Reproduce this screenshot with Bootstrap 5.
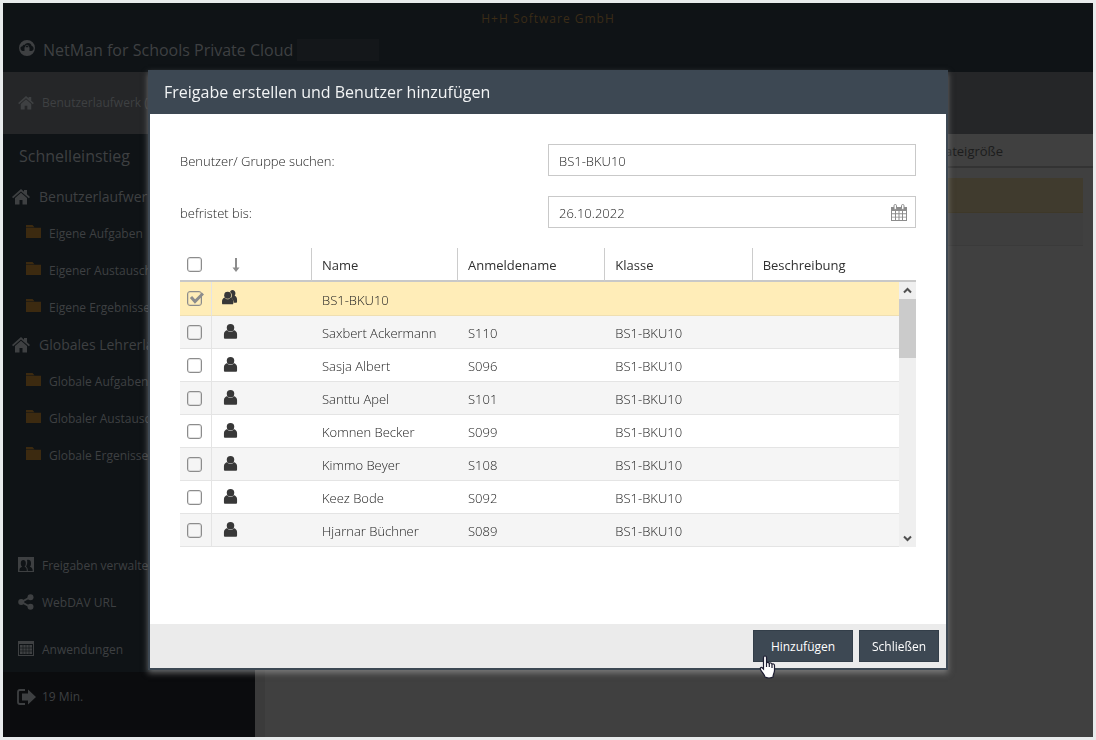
<!DOCTYPE html>
<html lang="de">
<head>
<meta charset="utf-8">
<meta name="viewport" content="width=device-width, initial-scale=1">
<title>NetMan for Schools Private Cloud</title>
<link href="https://cdn.jsdelivr.net/npm/bootstrap@5.3.0/dist/css/bootstrap.min.css" rel="stylesheet">
<style>
  body { font-family: "Open Sans", sans-serif; font-size: 13px; line-height: 20px; background: #e8ebec; color: #404040; }
  a { text-decoration: none; color: inherit; }
  svg { flex: none; fill: currentColor; }
  .shell { min-height: 100vh; padding: 3px; }
  .topbar { background: #0f1316; height: 69px; }
  .company { color: #3b2c16; font-size: 12px; letter-spacing: 1px; padding-top: 6px; }
  .product { font-size: 16px; line-height: 24px; padding: 9px 16px 0; gap: 8px; }
  .product svg { margin-top: -4px; }
  .tenant { width: 82px; height: 22px; background: #14171a; margin-left: -4px; }
  .crumbs { background: #252628; height: 62px; padding: 0 15px; gap: 8px; font-size: 12px; }
  .side { background: #0f1316; width: 252px; flex: none; font-size: 12px; }
  .side-title { font-size: 16px; line-height: 24px; padding: 10px 16px; margin: 0; font-weight: 400; }
  .drive { font-size: 14px; height: 37px; padding-left: 9px; gap: 9px; }
  .entry { height: 37px; padding-left: 23px; gap: 8px; }
  .folder { color: #3c2a10; margin-top: -5px; }
  .tool { height: 37px; padding-left: 15px; gap: 8px; }
  .tool svg { margin-top: -2px; }
  .tool.apps { margin: 10px 0 4px; }
  .session { background: #0b0c0e; height: 65px; padding: 0 14px 16px; gap: 6px; }
  .files { background: #404040; border-left: 10px solid #3b3b3b; }
  .files-head { height: 34px; border-bottom: 2px solid #333; color: #1c1c1c; padding: 2px 90px 0 0; }
  .file-row { height: 33px; margin: 0 10px; background: #3e3e3e; border-bottom: 1px solid #3a3a3a; }
  .file-row.chosen { height: 35px; margin-top: 10px; background: #403b2e; border-color: #3e3828; }
  .share-width { max-width: 800px; margin: 0 auto; }
  .share { border: 2px solid #3d4853; border-top: 0; border-radius: 0; box-shadow: 0 3px 6px rgba(170,170,170,.55); }
  .share-head { background: #3d4853; color: #f2f4f5; height: 44px; padding: 0 14px; border: 0; border-radius: 0; }
  .share-head h1 { font-size: 16px; line-height: 24px; font-weight: 400; margin: 0; }
  .share-body { padding: 30px 30px 77px; font-weight: 300; color: #222; }
  .field { height: 32px; margin-bottom: 20px; }
  .field input { border: 1px solid #c9c9c9; border-radius: 0; height: 32px; font-size: 13px; font-weight: 300; color: #222; padding: 2px 10px 0; }
  .field label { padding-top: 2px; }
  .cal { right: 9px; top: 8px; padding: 0; border: 0; background: none; color: #8c8c8c; line-height: 1; }
  .people { table-layout: fixed; margin: 0; border-collapse: separate; border-spacing: 0; font-weight: 300; }
  .people th { height: 34px; font-weight: 400; color: #303030; padding: 2px 10px 0; border-left: 1px solid #ccc; border-bottom: 2px solid #c8c8c8; vertical-align: middle; }
  .people td { height: 33px; padding: 2px 11px 0; border-bottom: 1px solid #e4e4e4; vertical-align: middle; background: none; box-shadow: none; color: #222; }
  .people th:nth-child(-n+2) { border-left: 0; }
  .people th:first-child, .people td:first-child { padding: 0 7px; }
  .people td:nth-child(2) { border-left: 1px solid #e4e4e4; padding: 0 10px 2px; color: #383838; }
  .people tbody tr:nth-child(even) { background: #f5f5f5; }
  .people tbody tr.chosen { background: #ffedb8; }
  .people tr.chosen td { height: 34px; border-bottom-color: #efdfb2; }
  .people svg { display: block; }
  .people .sort { color: #8c8c8c; margin-left: 11px; }
  .tick { appearance: none; display: block; width: 15px; height: 15px; border: 1px solid #8c8c8c; border-radius: 3px; background: transparent; margin: 0; box-shadow: inset 0 0 0 1px rgba(140,140,140,.25); }
  .tick-mark { left: 2px; top: 0; color: #8c8c8c; pointer-events: none; }
  .scroller { width: 17px; background: #efefef; color: #505050; }
  .scroller-gap { height: 34px; background: #fff; border-bottom: 2px solid #c8c8c8; }
  .scroller-thumb { height: 59px; background: #cbcbcb; }
  .scroller-end { height: 17px; }
  .share-foot { background: #ebebeb; height: 44px; padding: 0 7px; gap: 6px; border: 0; border-radius: 0; }
  .share-foot > * { margin: 0; }
  .act { background: #3d4853; color: #fff; border: 1px solid #333e49; border-radius: 0; width: 80px; height: 32px; font-size: 12px; line-height: 20px; padding: 2px 0 0; display: block; }
  .act:hover { background: #3d4853; color: #fff; }
  .act.wide { width: 100px; }
  .hand { left: 5px; top: 25px; z-index: 2; }
  .dim { color: #3e4042; }
</style>
</head>
<body>
<svg class="d-none" aria-hidden="true">
  <symbol id="house" viewBox="0 0 18 16"><path d="M9 0 0 8l1.200 1.300L9 2.500l7.800 6.800L18 8l-3-2.700V1h-3v1.700z"/><path d="M9 3.800 3 9v6.500h4.500V11h3v4.500H15V9z"/></symbol>
  <symbol id="folder" viewBox="0 0 16 14" preserveAspectRatio="none"><path d="M0 0h7l2 2.300H0zM0 3h16v11H0z"/></symbol>
  <symbol id="person" viewBox="0 0 14 16"><circle cx="7" cy="4" r="4"/><path d="M3.500 6.500C1.200 7.200 0 9 0 11v3.500c0 .8.500 1.300 1.300 1.300h11.400c.8 0 1.300-.5 1.300-1.300V11c0-2-1.200-3.800-3.500-4.500C9.600 8 8.500 8.600 7 8.600S4.400 8 3.500 6.500z"/></symbol>
</svg>
<div class="shell d-flex flex-column">
  <header class="topbar dim">
    <div class="company text-center">H+H Software GmbH</div>
    <div class="product d-flex align-items-center">
      <svg width="16" height="16" viewBox="0 0 16 16"><path fill-rule="evenodd" d="M8 0a8 8 0 1 1 0 16A8 8 0 0 1 8 0zM1.500 8c0 1.700.8 2.900 2.200 2.900h8.600c1.300 0 2.300-1.100 2.300-2.500 0-1.200-.8-2.200-1.900-2.400C12.300 4.300 10.900 3 9 3c-1.500 0-2.600.7-3.200 1.900-1.100-.2-2 .4-2.300 1.400C2.300 6.400 1.500 7.100 1.500 8z"/><path fill-rule="evenodd" d="M5.500 7.300h.8V6.500a1.700 1.700 0 0 1 3.400 0v.8h.8v4.200h-5zM7 7.300h2V6.500a1 1 0 0 0-2 0z"/></svg>
      <span>NetMan for Schools Private Cloud</span><span class="tenant"></span>
    </div>
  </header>
  <nav class="crumbs dim d-flex align-items-center" aria-label="Pfad">
    <svg width="16" height="14"><use href="#house"/></svg><a href="#">Benutzerlaufwerk (</a>
  </nav>
  <div class="d-flex flex-grow-1">
    <aside class="side dim d-flex flex-column">
      <h2 class="side-title">Schnelleinstieg</h2>
      <a href="#" class="drive d-flex align-items-center"><svg width="18" height="16"><use href="#house"/></svg>Benutzerlaufwerk</a>
      <a href="#" class="entry d-flex align-items-center"><svg class="folder" width="15" height="13"><use href="#folder"/></svg>Eigene Aufgaben</a>
      <a href="#" class="entry d-flex align-items-center"><svg class="folder" width="15" height="13"><use href="#folder"/></svg>Eigener Austausch</a>
      <a href="#" class="entry d-flex align-items-center"><svg class="folder" width="15" height="13"><use href="#folder"/></svg>Eigene Ergebnisse</a>
      <a href="#" class="drive d-flex align-items-center"><svg width="18" height="16"><use href="#house"/></svg>Globales Lehrerlaufwerk</a>
      <a href="#" class="entry d-flex align-items-center"><svg class="folder" width="15" height="13"><use href="#folder"/></svg>Globale Aufgaben</a>
      <a href="#" class="entry d-flex align-items-center"><svg class="folder" width="15" height="13"><use href="#folder"/></svg>Globaler Austausch</a>
      <a href="#" class="entry d-flex align-items-center"><svg class="folder" width="15" height="13"><use href="#folder"/></svg>Globale Ergenisse</a>
      <div class="mt-auto">
        <a href="#" class="tool d-flex align-items-center"><svg width="16" height="15" viewBox="0 0 16 15"><path d="M0 0h16v15H0z"/><path d="M1.500 14c0-2.500.3-3.300 2.600-4.200C3 8.800 2.800 7.800 2.800 6c0-2 1-3 2.500-3s2.500 1 2.500 3c0 1.800-.2 2.800-1.300 3.800C8.200 10.400 8.800 11 8.800 14z" fill="#0f1316"/><path d="M9 3c1.700-.8 4 0 4 3 0 1.800-.2 2.800-1.200 3.800 2 .7 2.900 1.700 2.900 4.200h-4.900c0-2.300-.4-3.500-1.800-4.400C9.300 7.500 9.500 5 9 3z" fill="#0f1316"/></svg>Freigaben verwalten</a>
        <a href="#" class="tool d-flex align-items-center"><svg width="16" height="16" viewBox="0 0 16 16"><path d="M12.500 3 3.500 8l9 5" fill="none" stroke="currentColor" stroke-width="2"/><circle cx="12.500" cy="3.300" r="3"/><circle cx="3.200" cy="8" r="3"/><circle cx="12.500" cy="12.700" r="3"/></svg>WebDAV URL</a>
        <a href="#" class="tool apps d-flex align-items-center"><svg width="16" height="15" viewBox="0 0 16 15"><path fill-rule="evenodd" d="M0 0h16v15H0zM1 3v11h14V3z"/><path d="M2 4h12v9H2z"/><path d="M5 4v9M8 4v9M11 4v9M2 7h12M2 10h12" stroke="#0f1316" stroke-width=".6"/></svg>Anwendungen</a>
      </div>
      <div class="session d-flex align-items-center">
        <svg width="19" height="16" viewBox="0 0 19 16"><path d="M8 1H3Q1 1 1 3v10q0 2 2 2h5" fill="none" stroke="currentColor" stroke-width="1.800"/><path d="M5 4.500h6V.5L19 8l-8 7.500v-4H5z"/></svg>19 Min.
      </div>
    </aside>
    <main class="files flex-grow-1">
      <div class="files-head d-flex align-items-center justify-content-end">Dateigröße</div>
      <div class="file-row chosen"></div>
      <div class="file-row"></div>
    </main>
  </div>
</div>

<div class="modal d-block" tabindex="-1" role="dialog" aria-modal="true" aria-labelledby="shareTitle">
  <div class="share-width d-flex align-items-center min-vh-100">
    <form class="share modal-content" onsubmit="return false">
      <div class="share-head modal-header"><h1 id="shareTitle">Freigabe erstellen und Benutzer hinzufügen</h1></div>
      <div class="share-body modal-body">
        <div class="field row g-0 align-items-center">
          <label class="col-6" for="who">Benutzer/ Gruppe suchen:</label>
          <div class="col-6"><input id="who" class="form-control" type="text" value="BS1-BKU10"></div>
        </div>
        <div class="field row g-0 align-items-center">
          <label class="col-6" for="until">befristet bis:</label>
          <div class="col-6 position-relative"><input id="until" class="form-control" type="text" value="26.10.2022">
            <button type="button" class="cal position-absolute" aria-label="Kalender"><svg width="16" height="17" viewBox="0 0 16 17"><path fill-rule="evenodd" d="M0 3h16v14H0zM1 7v2.300h3V7zm4 0v2.300h2.500V7zm3.500 0v2.300H11V7zM12 7v2.300h3V7zM1 10.200v2.500h3v-2.500zm4 0v2.500h2.500v-2.500zm3.500 0v2.500H11v-2.500zm3.500 0v2.500h3v-2.500zM1 13.600V16h3v-2.400zm4 0V16h2.500v-2.400zm3.500 0V16H11v-2.400zm3.500 0V16h3v-2.400z"/><rect x="3" y=".5" width="2.500" height="5" rx="1.200" fill="#fff" stroke="currentColor"/><rect x="10.500" y=".5" width="2.500" height="5" rx="1.200" fill="#fff" stroke="currentColor"/></svg></button>
          </div>
        </div>
        <div class="d-flex">
          <table class="people table">
            <colgroup><col style="width:31px"><col style="width:100px"><col style="width:146px"><col><col><col></colgroup>
            <thead><tr>
              <th><input class="tick" type="checkbox" aria-label="Alle auswählen"></th>
              <th><svg class="sort" width="8" height="14" viewBox="0 0 8 14"><path d="M3 0h2v9.500h2.500L4 14 .5 9.500H3z"/></svg></th>
              <th>Name</th><th>Anmeldename</th><th>Klasse</th><th>Beschreibung</th>
            </tr></thead>
            <tbody>
              <tr class="chosen"><td><div class="position-relative"><input class="tick" type="checkbox" checked aria-label="BS1-BKU10"><svg class="tick-mark position-absolute" width="15" height="14" viewBox="0 0 15 14"><path d="m2 6 4 4.500L14 2.500" fill="none" stroke="currentColor" stroke-width="3"/></svg></div></td>
                <td><svg width="16" height="15" viewBox="0 0 17 16"><path d="M11 0c2 0 3.300 1.500 3.300 3.500 0 1-.3 1.900-.8 2.600 1.700.7 2.500 2 2.500 3.900v2.500c0 .7-.5 1-1 1h-2.600c-.1-2.300-.9-3.800-2.700-4.900 1.200-2 1.200-4.900-1.200-6.500C9 .8 9.900 0 11 0z"/><circle cx="6" cy="5.500" r="3.700"/><path d="M3 8c-2 .6-3 2-3 4v2c0 .8.500 1.300 1.200 1.300h9.600c.7 0 1.200-.5 1.200-1.300v-2c0-2-1-3.400-3-4-.6 1.200-1.700 1.900-3 1.900S3.600 9.200 3 8z"/></svg></td>
                <td>BS1-BKU10</td><td></td><td></td><td></td></tr>
              <tr><td><input class="tick" type="checkbox" aria-label="Saxbert Ackermann"></td><td><svg width="17" height="15"><use href="#person"/></svg></td><td>Saxbert Ackermann</td><td>S110</td><td>BS1-BKU10</td><td></td></tr>
              <tr><td><input class="tick" type="checkbox" aria-label="Sasja Albert"></td><td><svg width="17" height="15"><use href="#person"/></svg></td><td>Sasja Albert</td><td>S096</td><td>BS1-BKU10</td><td></td></tr>
              <tr><td><input class="tick" type="checkbox" aria-label="Santtu Apel"></td><td><svg width="17" height="15"><use href="#person"/></svg></td><td>Santtu Apel</td><td>S101</td><td>BS1-BKU10</td><td></td></tr>
              <tr><td><input class="tick" type="checkbox" aria-label="Komnen Becker"></td><td><svg width="17" height="15"><use href="#person"/></svg></td><td>Komnen Becker</td><td>S099</td><td>BS1-BKU10</td><td></td></tr>
              <tr><td><input class="tick" type="checkbox" aria-label="Kimmo Beyer"></td><td><svg width="17" height="15"><use href="#person"/></svg></td><td>Kimmo Beyer</td><td>S108</td><td>BS1-BKU10</td><td></td></tr>
              <tr><td><input class="tick" type="checkbox" aria-label="Keez Bode"></td><td><svg width="17" height="15"><use href="#person"/></svg></td><td>Keez Bode</td><td>S092</td><td>BS1-BKU10</td><td></td></tr>
              <tr><td><input class="tick" type="checkbox" aria-label="Hjarnar Büchner"></td><td><svg width="17" height="15"><use href="#person"/></svg></td><td>Hjarnar Büchner</td><td>S089</td><td>BS1-BKU10</td><td></td></tr>
            </tbody>
          </table>
          <div class="scroller d-flex flex-column flex-shrink-0" aria-hidden="true">
            <div class="scroller-gap"></div>
            <div class="scroller-end d-flex align-items-center justify-content-center"><svg width="9" height="7" viewBox="0 0 9 7"><path d="m1 5.500 3.500-3.500L8 5.500" fill="none" stroke="currentColor" stroke-width="2"/></svg></div>
            <div class="scroller-thumb"></div>
            <div class="scroller-end d-flex align-items-center justify-content-center mt-auto"><svg width="9" height="7" viewBox="0 0 9 7"><path d="m1 1.500 3.500 3.500L8 1.500" fill="none" stroke="currentColor" stroke-width="2"/></svg></div>
          </div>
        </div>
      </div>
      <div class="share-foot modal-footer">
        <div class="position-relative">
          <button type="submit" class="act wide btn">Hinzufügen</button>
          <svg class="hand position-absolute" width="18" height="24" viewBox="0 0 18 24" aria-hidden="true"><path d="M5.500 14V2.800c0-2.400 3-2.400 3 0V8c.5-1 2.500-.9 2.800.5.600-.9 2.400-.7 2.700.7.800-.7 2.500-.4 2.500 1.300v5c0 2.500-1.500 3.500-1.500 6.500-1.500 1.300-6.500 1.300-8 0-.3-2.500-3-4.500-4.500-7.500-.8-1.800 1-2.700 2-1.500z" fill="#fff" stroke="#1c1c30" stroke-width="1.200"/><path d="M8.500 8v4M11.300 8.500V12M14 9.500V13" stroke="#1c1c30" stroke-width="1.200"/></svg>
        </div>
        <button type="button" class="act btn">Schließen</button>
      </div>
    </form>
  </div>
</div>
<script src="https://cdn.jsdelivr.net/npm/bootstrap@5.3.0/dist/js/bootstrap.bundle.min.js"></script>
</body>
</html>
